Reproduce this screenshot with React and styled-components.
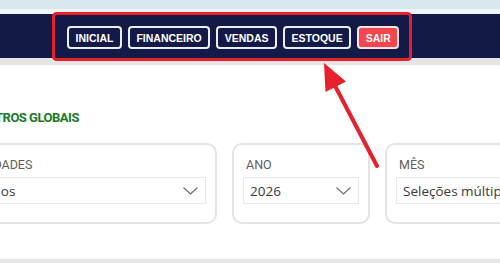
import React from "react";
import styled, { createGlobalStyle } from "styled-components";

const GlobalStyle = createGlobalStyle`
  html, body {
    margin: 0;
    padding: 0;
    background: #ffffff;
    overflow: hidden;
  }
`;

const Page = styled.div`
  position: relative;
  width: 500px;
  height: 263px;
  overflow: hidden;
  background: #ffffff;
`;

const TopStrip = styled.div`
  height: 9px;
  background: #d9e8ed;
`;

const TopLine = styled.div`
  height: 5px;
  background: #eef6f9;
`;

const Header = styled.header`
  height: 44px;
  box-sizing: border-box;
  padding: 12px 0 0 67px;
  background: #141a48;
  display: flex;
  align-items: flex-start;
`;

const Nav = styled.nav`
  display: flex;
  gap: 6px;
`;

const NavButton = styled.button`
  height: 23px;
  box-sizing: border-box;
  padding: 0 6.5px;
  border: 2px solid ${({ danger }) => (danger ? "#fbe3e4" : "#eceef5")};
  border-radius: 4px;
  background: ${({ danger }) => (danger ? "#f2474e" : "transparent")};
  color: #ffffff;
  font-family: "Liberation Sans", Arial, sans-serif;
  font-weight: 700;
  font-size: 10.5px;
  cursor: pointer;
`;

const HeaderShadow = styled.div`
  height: 7px;
  background: #e5e5e5;
`;

const FilterSection = styled.section`
  margin-left: -41px;
  padding-top: 45px;
  height: 194px;
  box-sizing: border-box;
`;

const Title = styled.h2`
  margin: 0 0 17px 21px;
  font-family: Roboto, "Liberation Sans", sans-serif;
  font-weight: 700;
  font-size: 13px;
  line-height: 16px;
  letter-spacing: -0.5px;
  color: #177a27;
`;

const CardRow = styled.div`
  display: flex;
  gap: 15px;
`;

const Card = styled.div`
  flex: 0 0 auto;
  width: ${({ w }) => w}px;
  height: 81px;
  box-sizing: border-box;
  padding: 12px 9px 0 9px;
  border: 2px solid #e4e4e4;
  border-radius: 10px;
  background: #ffffff;
`;

const Label = styled.div`
  margin: 0 0 4px 3px;
  font-family: Roboto, "Liberation Sans", sans-serif;
  font-size: 12.5px;
  line-height: 16px;
  color: #5f5e5c;
`;

const Select = styled.div`
  height: 27px;
  box-sizing: border-box;
  padding: 0 6px;
  border: 1px solid #e9e9e9;
  display: flex;
  align-items: center;
  justify-content: space-between;
  font-family: "Open Sans", "Noto Sans", sans-serif;
  font-size: 13.5px;
  color: #3b3a39;
  white-space: nowrap;
  overflow: hidden;
`;

const Chevron = () => (
  <svg width="15" height="8" viewBox="0 0 15 8" style={{ flex: "0 0 auto", marginRight: 1 }}>
    <polyline points="0.5,0.5 7.5,7 14.5,0.5" fill="none" stroke="#6b6b6b" strokeWidth="1.1" />
  </svg>
);

const BottomBand = styled.div`
  height: 4px;
  background: #e6e6e6;
`;

const Overlay = styled.svg`
  position: absolute;
  left: 0;
  top: 0;
  pointer-events: none;
`;

const filters = [
  { label: "UNIDADES", value: "Todos", width: 258, chevron: true },
  { label: "ANO", value: "2026", width: 138, chevron: true },
  { label: "MÊS", value: "Seleções múltiplas", width: 170, chevron: false },
];

const navItems = ["INICIAL", "FINANCEIRO", "VENDAS", "ESTOQUE"];

export default function App() {
  return (
    <Page>
      <GlobalStyle />
      <TopStrip />
      <TopLine />
      <Header>
        <Nav>
          {navItems.map((item) => (
            <NavButton key={item}>{item}</NavButton>
          ))}
          <NavButton danger>SAIR</NavButton>
        </Nav>
      </Header>
      <HeaderShadow />
      <FilterSection>
        <Title>FILTROS GLOBAIS</Title>
        <CardRow>
          {filters.map(({ label, value, width, chevron }) => (
            <Card key={label} w={width}>
              <Label>{label}</Label>
              <Select>
                <span>{value}</span>
                {chevron && <Chevron />}
              </Select>
            </Card>
          ))}
        </CardRow>
      </FilterSection>
      <BottomBand />
      <Overlay width="500" height="263" viewBox="0 0 500 263">
        <rect x="53.5" y="13.5" width="357" height="46" rx="3" fill="none" stroke="#e8202a" strokeWidth="3" />
        <line x1="377" y1="166" x2="333" y2="82" stroke="#e8202a" strokeWidth="4" strokeLinecap="round" />
        <polygon points="324,63 346,81.5 325.5,92" fill="#e8202a" />
      </Overlay>
    </Page>
  );
}
